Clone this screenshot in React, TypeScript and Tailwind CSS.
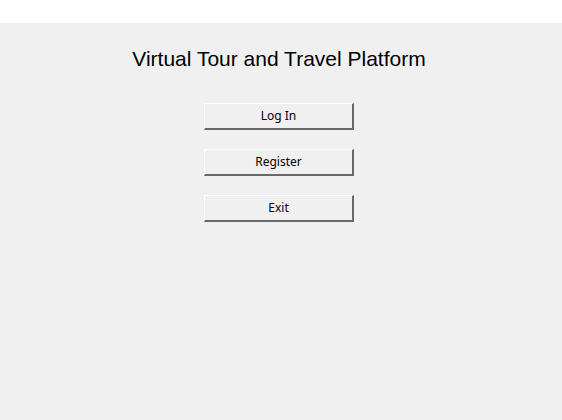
export default function App() {
  const btn =
    "w-[150px] h-[27px] bg-[#f0f0f0] border-t border-l border-t-white border-l-white border-r-2 border-b-2 border-r-[#696969] border-b-[#696969] text-[12px] text-black flex items-center justify-center";
  return (
    <div className="w-[562px] h-[420px] bg-white flex flex-col" style={{ fontFamily: '"Liberation Sans", Arial, sans-serif' }}>
      <div className="h-[23px] bg-white" />
      <div className="flex-1 bg-[#f0f0f0] flex flex-col items-center">
        <div className="mt-[22px] ml-[-4px] h-[27px] leading-[27px] text-[21px] text-black">Virtual Tour and Travel Platform</div>
        <div className="mt-[31px] flex flex-col gap-[19px] ml-[-4px]" style={{ fontFamily: '"Noto Sans", "DejaVu Sans", sans-serif' }}>
          <div className={btn}>Log In</div>
          <div className={btn}>Register</div>
          <div className={btn}>Exit</div>
        </div>
      </div>
    </div>
  );
}
